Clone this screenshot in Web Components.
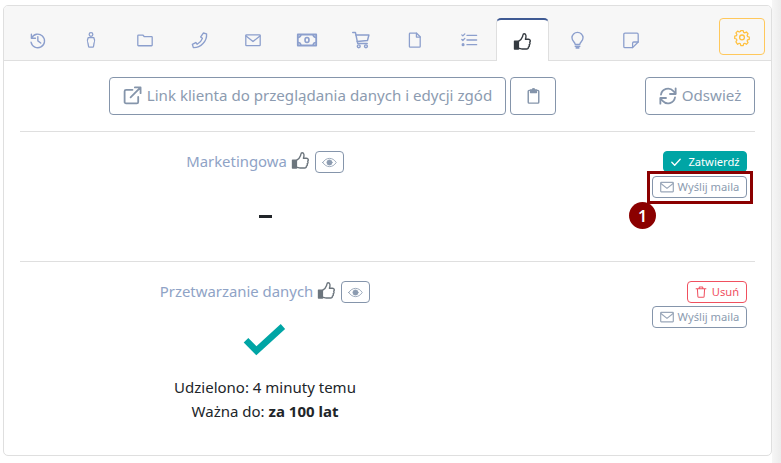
<!DOCTYPE html>
<html lang="pl"><head><meta charset="utf-8"><title>Zgody</title>
<style>
html,body{margin:0;padding:0;height:463px;overflow:hidden}
html{background:linear-gradient(to right,#fff 772px,#f6f6f6 772px,#ececec 781px)}
body{font-family:"Noto Sans","Open Sans",sans-serif;color:#212529}
</style></head><body>
<template id="icons">
<svg data-i="history" viewBox="0 0 20 20"><path d="M2.800 2.600v4.800h4.800" /><path d="M3 7.200A8 8 0 1 1 2.400 12" /><path d="M10.400 5.400v5l3.400 2.600" /></svg>
<svg data-i="person" viewBox="0 0 20 20"><circle cx="10" cy="3" r="2.300"/><path d="M6.500 7h7c1.300 2.300 1.300 5 .3 7l-.6 3.800q-.1 1.200-1.100 1.200H8q-1 0-1.100-1.200L6.200 14c-1-2-1-4.700.3-7z"/></svg>
<svg data-i="folder" viewBox="0 0 20 20"><path d="M1.800 3.800h5.500l1.900 2.100h9a.8.8 0 0 1 .8.800v9.700a.8.800 0 0 1-.8.800H1.800a.8.8 0 0 1-.8-.8V4.600a.8.800 0 0 1 .8-.8z"/></svg>
<svg data-i="phone" viewBox="0 0 20 20"><path d="M14.500 1.200l3.800 1c.8 8.500-6.800 16.500-15.500 16.200l-1.200-3.800 4-2.200 1.700 2c2.800-1.400 5-3.800 6.100-6.900l-2-1.700z"/></svg>
<svg data-i="mail" viewBox="0 0 20 20"><rect x="1" y="3.500" width="18" height="13.500" rx=".8"/><path d="M1.300 5L10 12l8.700-7"/></svg>
<svg data-i="money" viewBox="0 0 20 20"><rect x=".8" y="4.500" width="18.400" height="11" stroke-width="1.800"/><path d="M1 7.500q2.500 0 3-2.800M19 7.500q-2.500 0-3-2.800M1 12.500q2.500 0 3 2.800M19 12.500q-2.500 0-3 2.800"/><ellipse cx="10" cy="10" rx="2" ry="2.500"/></svg>
<svg data-i="cart" viewBox="0 0 20 20"><path d="M.8 1.600h3l2.500 12.200h10.600"/><path d="M4.300 4.400h14.500l-1.600 6.200-11.500 1"/><circle cx="7.500" cy="17" r="1.600"/><circle cx="15.500" cy="17" r="1.600"/></svg>
<svg data-i="file" viewBox="0 0 20 20"><path d="M4 1.500h8l4.500 4.500v12a1 1 0 0 1-1 1H4a1 1 0 0 1-1-1V2.500a1 1 0 0 1 1-1z"/><path d="M11.800 1.500v4.800h4.700"/></svg>
<svg data-i="tasks" viewBox="0 0 20 20"><path d="M7.500 4.200h12M7.500 10h12M7.500 15.800h12" stroke-width="1.800"/><path d="M1 3.600l1.300 1.300L4.800 2.300M1 9.300l1.300 1.300L4.800 8"/><circle cx="2.600" cy="15.800" r="1.100" fill="currentColor"/></svg>
<svg data-i="thumb" viewBox="0 0 20 20"><path d="M.6 9.500h4.600v9.300H.6z" fill="currentColor"/><path d="M5.200 9.800c2-.8 4.200-3.400 4.900-5.600.4-1.300.2-3.300 1.900-3.300 2.100 0 2.800 2.800 1.400 6.500h3.600c2.400 0 2.800 2.500 1.400 3.400.8 1 .5 2.500-.5 3 .4 1.200-.1 2.400-1 2.700.2 1.500-.7 2.300-2.100 2.300h-5.300c-1.600 0-2.500-.9-4.300-.9"/></svg>
<svg data-i="bulb" viewBox="0 0 20 20"><path d="M7.300 14.500c-.4-2.700-3.800-3.900-3.800-7.600a6.500 6.500 0 0 1 13 0c0 3.700-3.400 4.900-3.800 7.600z"/><path d="M7.400 16.800h5.200M8.500 18.700h3" stroke-width="1.900"/></svg>
<svg data-i="note" viewBox="0 0 20 20"><path d="M19 12.500V3a1.500 1.500 0 0 0-1.500-1.500h-15A1.500 1.500 0 0 0 1 3v15a1.500 1.500 0 0 0 1.500 1.500H12z"/><path d="M12 19.500v-5.500a1.500 1.500 0 0 1 1.500-1.500H19"/></svg>
<svg data-i="gear" viewBox="0 0 20 20"><path d="M8.400 1.500h3.200l.5 2.400 1.500.7 2.200-1.200 2.200 2.300-1.300 2.100.6 1.600 2.300.6v3.100l-2.300.6-.6 1.500 1.300 2.200-2.200 2.200-2.200-1.300-1.500.7-.5 2.300H8.400l-.5-2.300-1.500-.7-2.200 1.300L2 16.300l1.300-2.200-.6-1.500-2.300-.6V8.900l2.300-.6.6-1.600L2 4.600l2.200-2.300 2.200 1.200 1.500-.7z" transform="translate(.5 .5) scale(.95)"/><circle cx="10" cy="10.500" r="3"/></svg>
<svg data-i="external" viewBox="0 0 20 20"><path d="M16 11.500v5.300a1.500 1.500 0 0 1-1.500 1.500H3.200a1.500 1.500 0 0 1-1.500-1.500V5.500A1.500 1.500 0 0 1 3.200 4H10" stroke-width="1.900"/><path d="M12.500 1.500h6v6M18.200 1.800L8 12" stroke-width="1.900"/></svg>
<svg data-i="clip" viewBox="0 0 20 20"><path d="M6.500 4H4.800a1 1 0 0 0-1 1v13a1 1 0 0 0 1 1h10.400a1 1 0 0 0 1-1V5a1 1 0 0 0-1-1h-1.700" stroke-width="1.700"/><path d="M6.500 3.500h2a1.500 1.500 0 0 1 3 0h2v3h-7z" fill="currentColor"/></svg>
<svg data-i="sync" viewBox="0 0 20 20"><path d="M2.200 8.500A8 8 0 0 1 16 4.500l2.200 2.300" stroke-width="2"/><path d="M18.500 1.500v6.300h-6.300" stroke-width="2"/><path d="M17.800 11.500A8 8 0 0 1 4 15.500l-2.200-2.300" stroke-width="2"/><path d="M1.500 18.500v-6.300h6.300" stroke-width="2"/></svg>
<svg data-i="eye" viewBox="0 0 20 20"><path d="M1 10c2.500-3.700 5.500-5.500 9-5.500s6.500 1.800 9 5.500c-2.500 3.700-5.500 5.500-9 5.500S3.500 13.700 1 10z"/><circle cx="10" cy="10" r="3.400" fill="currentColor"/></svg>
<svg data-i="check" viewBox="0 0 20 20"><path d="M3 10.500l4.800 4.800L17 5.500" stroke-width="2.200"/></svg>
<svg data-i="bigcheck" viewBox="0 0 20 20"><path d="M2.700 10.500l4 4L16.900 5.200" stroke-width="2.500" style="stroke-linecap:butt;stroke-linejoin:miter"/></svg>
<svg data-i="trash" viewBox="0 0 20 20"><path d="M1.800 4.500h16.400M7 4.500V2.300q0-.8.800-.8h4.400q.8 0 .8.800v2.200M4 4.500l.8 13a1.500 1.500 0 0 0 1.500 1.400h7.400a1.500 1.500 0 0 0 1.500-1.400l.8-13" stroke-width="1.700"/></svg>
</template>

<app-card></app-card>

<script>
const iconTpl=document.getElementById('icons');
class XIcon extends HTMLElement{
  connectedCallback(){
    if(this.shadowRoot)return;
    const r=this.attachShadow({mode:'open'});
    const s=+this.getAttribute('size')||18;
    r.innerHTML=`<style>:host{display:inline-flex;width:${s}px;height:${s}px;flex:none;vertical-align:middle}
    svg{width:100%;height:100%;fill:none;stroke:currentColor;stroke-width:${this.getAttribute('sw')||1.6};stroke-linecap:round;stroke-linejoin:round;overflow:visible}</style>`;
    const g=iconTpl.content.querySelector(`[data-i="${this.getAttribute('name')}"]`);
    if(g)r.appendChild(g.cloneNode(true));
  }
}
customElements.define('x-icon',XIcon);

class XBtn extends HTMLElement{
  constructor(){super();
    this.attachShadow({mode:'open'}).innerHTML=`<style>
    :host{display:inline-flex;align-items:center;justify-content:center;box-sizing:border-box;gap:var(--gap,4px);
      height:var(--h,38px);padding:0 var(--px,12px);border:1px solid var(--bd,#8595ab);border-radius:4px;
      color:var(--fg,#8c9bb0);background:var(--bg,#fff);font-size:var(--fs,15.1px);white-space:nowrap;line-height:1}
    </style><slot></slot>`;}
}
customElements.define('x-btn',XBtn);

class TabBar extends HTMLElement{
  constructor(){super();
    const items=['history','person','folder','phone','mail','money','cart','file','tasks','thumb','bulb','note'];
    const sizes={history:17,person:16,folder:16,phone:17,mail:16,money:20,cart:18,file:16,tasks:16,bulb:17,note:16};
    this.attachShadow({mode:'open'}).innerHTML=`<style>
    :host{display:flex;align-items:flex-start;justify-content:space-between;height:55px;box-sizing:border-box;
      background:#f7f7f7;border-bottom:1px solid #dfdfdf;padding:12px 6px 0 6px;border-radius:4px 4px 0 0}
    .tabs{display:flex;height:43px}
    .tab{width:54px;box-sizing:border-box;display:flex;align-items:center;justify-content:center;padding-top:1px;color:#8c9fcd}
    .tab.on{height:43px;background:#fff;border:1px solid #dfdfdf;border-bottom:0;border-top:2px solid #3f5a93;border-radius:5px 5px 0 0;color:#343a40;width:53px;margin-left:0;margin-right:1px}
    .gear{width:46px;height:37px;box-sizing:border-box;border:1px solid #ffc85c;border-radius:4px;display:flex;align-items:center;justify-content:center;color:#ffc03d}
    </style><div class="tabs">${items.map(n=>`<div class="tab${n=='thumb'?' on':''}"><x-icon name="${n}" size="${n=='thumb'?17:sizes[n]}"></x-icon></div>`).join('')}</div>
    <div class="gear"><x-icon name="gear" size="16"></x-icon></div>`;}
}
customElements.define('tab-bar',TabBar);

class ToolBar extends HTMLElement{
  constructor(){super();
    this.attachShadow({mode:'open'}).innerHTML=`<style>
    :host{display:flex;align-items:center;height:71px;box-sizing:border-box;border-bottom:1px solid #dfdfdf;margin:0 16px;padding:0 0 1px 89px}
    .sp{flex:1} x-btn+x-btn{margin-left:4px}
    .ic{color:#8595ab}
    </style>
    <x-btn style="width:397px;--px:0;--gap:5px"><x-icon class="ic" name="external" size="19"></x-icon><span>Link klienta do przeglądania danych i edycji zgód</span></x-btn>
    <x-btn style="width:46px"><x-icon class="ic" name="clip" size="17"></x-icon></x-btn>
    <div class="sp"></div>
    <x-btn style="width:110px;--gap:5px"><x-icon class="ic" name="sync" size="18"></x-icon><span>Odswież</span></x-btn>`;}
}
customElements.define('tool-bar',ToolBar);

class ConsentRow extends HTMLElement{
  constructor(){super();
    this.attachShadow({mode:'open'}).innerHTML=`<style>
    :host{display:grid;grid-template-columns:490px 1fr;box-sizing:border-box;margin:0 16px;padding:19px 8px 0 0;height:var(--rh,130px);border-bottom:var(--rb,1px solid #dfdfdf)}
    .main{display:flex;flex-direction:column;align-items:center}
    .title{display:flex;align-items:center;height:22px;font-size:14.9px;color:#8fa3c6}
    .nm{padding-bottom:2px}
    .title x-icon.th{color:#6c757d;margin:0 6px 4px 5px}
    .eye{--h:22px;--px:0;width:29px;--fs:12px}
    .acts{display:flex;flex-direction:column;align-items:flex-end;gap:var(--ag,4px)}
    .body{display:flex;flex-direction:column;align-items:center}
    </style>
    <div class="main"><div class="title"><span class="nm"><slot name="title"></slot></span><x-icon class="th" name="thumb" size="17"></x-icon><x-btn class="eye"><x-icon name="eye" size="15" sw="1.100"></x-icon></x-btn></div>
    <div class="body"><slot name="body"></slot></div></div>
    <div class="acts"><slot name="actions"></slot></div>`;}
}
customElements.define('consent-row',ConsentRow);

class MailBtn extends HTMLElement{
  constructor(){super();
    this.attachShadow({mode:'open'}).innerHTML=`<style>:host{display:flex}
    x-btn{--h:22px;--px:0;--fs:11.2px;width:95px;--gap:4px;--bd:#8595ab;--fg:#8c9bb0}
    x-icon{color:#9aa7b9}</style><x-btn><x-icon name="mail" size="14" sw="1.700"></x-icon><span>Wyślij maila</span></x-btn>`;}
}
customElements.define('mail-btn',MailBtn);

class AppCard extends HTMLElement{
  constructor(){super();
    this.attachShadow({mode:'open'}).innerHTML=`<style>
    :host{display:block;box-sizing:border-box;width:769px;height:451px;margin:5px 0 0 3px;border:1px solid #dfdfdf;border-radius:5px;background:#fff;position:relative}
    .dash{margin-top:23px;height:40px;display:flex;align-items:center}
    .dash i{display:block;width:13px;height:3px;background:#212529}
    .ok{color:#00a5a5;margin-top:10px;display:flex}
    .t{font-size:15px;line-height:24px;text-align:center;color:#212529}
    .t1{margin-top:10px}
    b{font-weight:700}
    .ann{position:absolute;left:643px;top:165px;width:106px;height:33px;box-sizing:border-box;border:3px solid #8b0000}
    .num{position:absolute;left:625px;top:196px;width:27px;height:27px;border-radius:50%;background:#8b0000;color:#fff;font-size:16px;font-weight:600;display:flex;align-items:center;justify-content:center}
    .zat{--bg:#00a5a5;--bd:#00a5a5;--fg:#fff;--h:21px;--px:0;--fs:11.2px;width:84px;--gap:6px}
    .del{--bd:#f0505f;--fg:#f0505f;--h:22px;--px:0;--fs:11.2px;width:60px;--gap:5px}
    </style>
    <tab-bar></tab-bar>
    <tool-bar></tool-bar>
    <consent-row>
      <span slot="title">Marketingowa</span>
      <div slot="body" class="dash"><i></i></div>
      <x-btn slot="actions" class="zat"><x-icon name="check" size="12"></x-icon><span>Zatwierdź</span></x-btn>
      <mail-btn slot="actions"></mail-btn>
    </consent-row>
    <consent-row style="--rb:0;--rh:189px;--ag:3px">
      <span slot="title">Przetwarzanie danych</span>
      <div slot="body" class="ok"><x-icon name="bigcheck" size="52"></x-icon></div>
      <div slot="body" class="t t1">Udzielono: 4 minuty temu</div>
      <div slot="body" class="t">Ważna do: <b>za 100 lat</b></div>
      <x-btn slot="actions" class="del"><x-icon name="trash" size="12"></x-icon><span>Usuń</span></x-btn>
      <mail-btn slot="actions"></mail-btn>
    </consent-row>
    <div class="ann"></div><div class="num">1</div>`;}
}
customElements.define('app-card',AppCard);
</script>
</body></html>
